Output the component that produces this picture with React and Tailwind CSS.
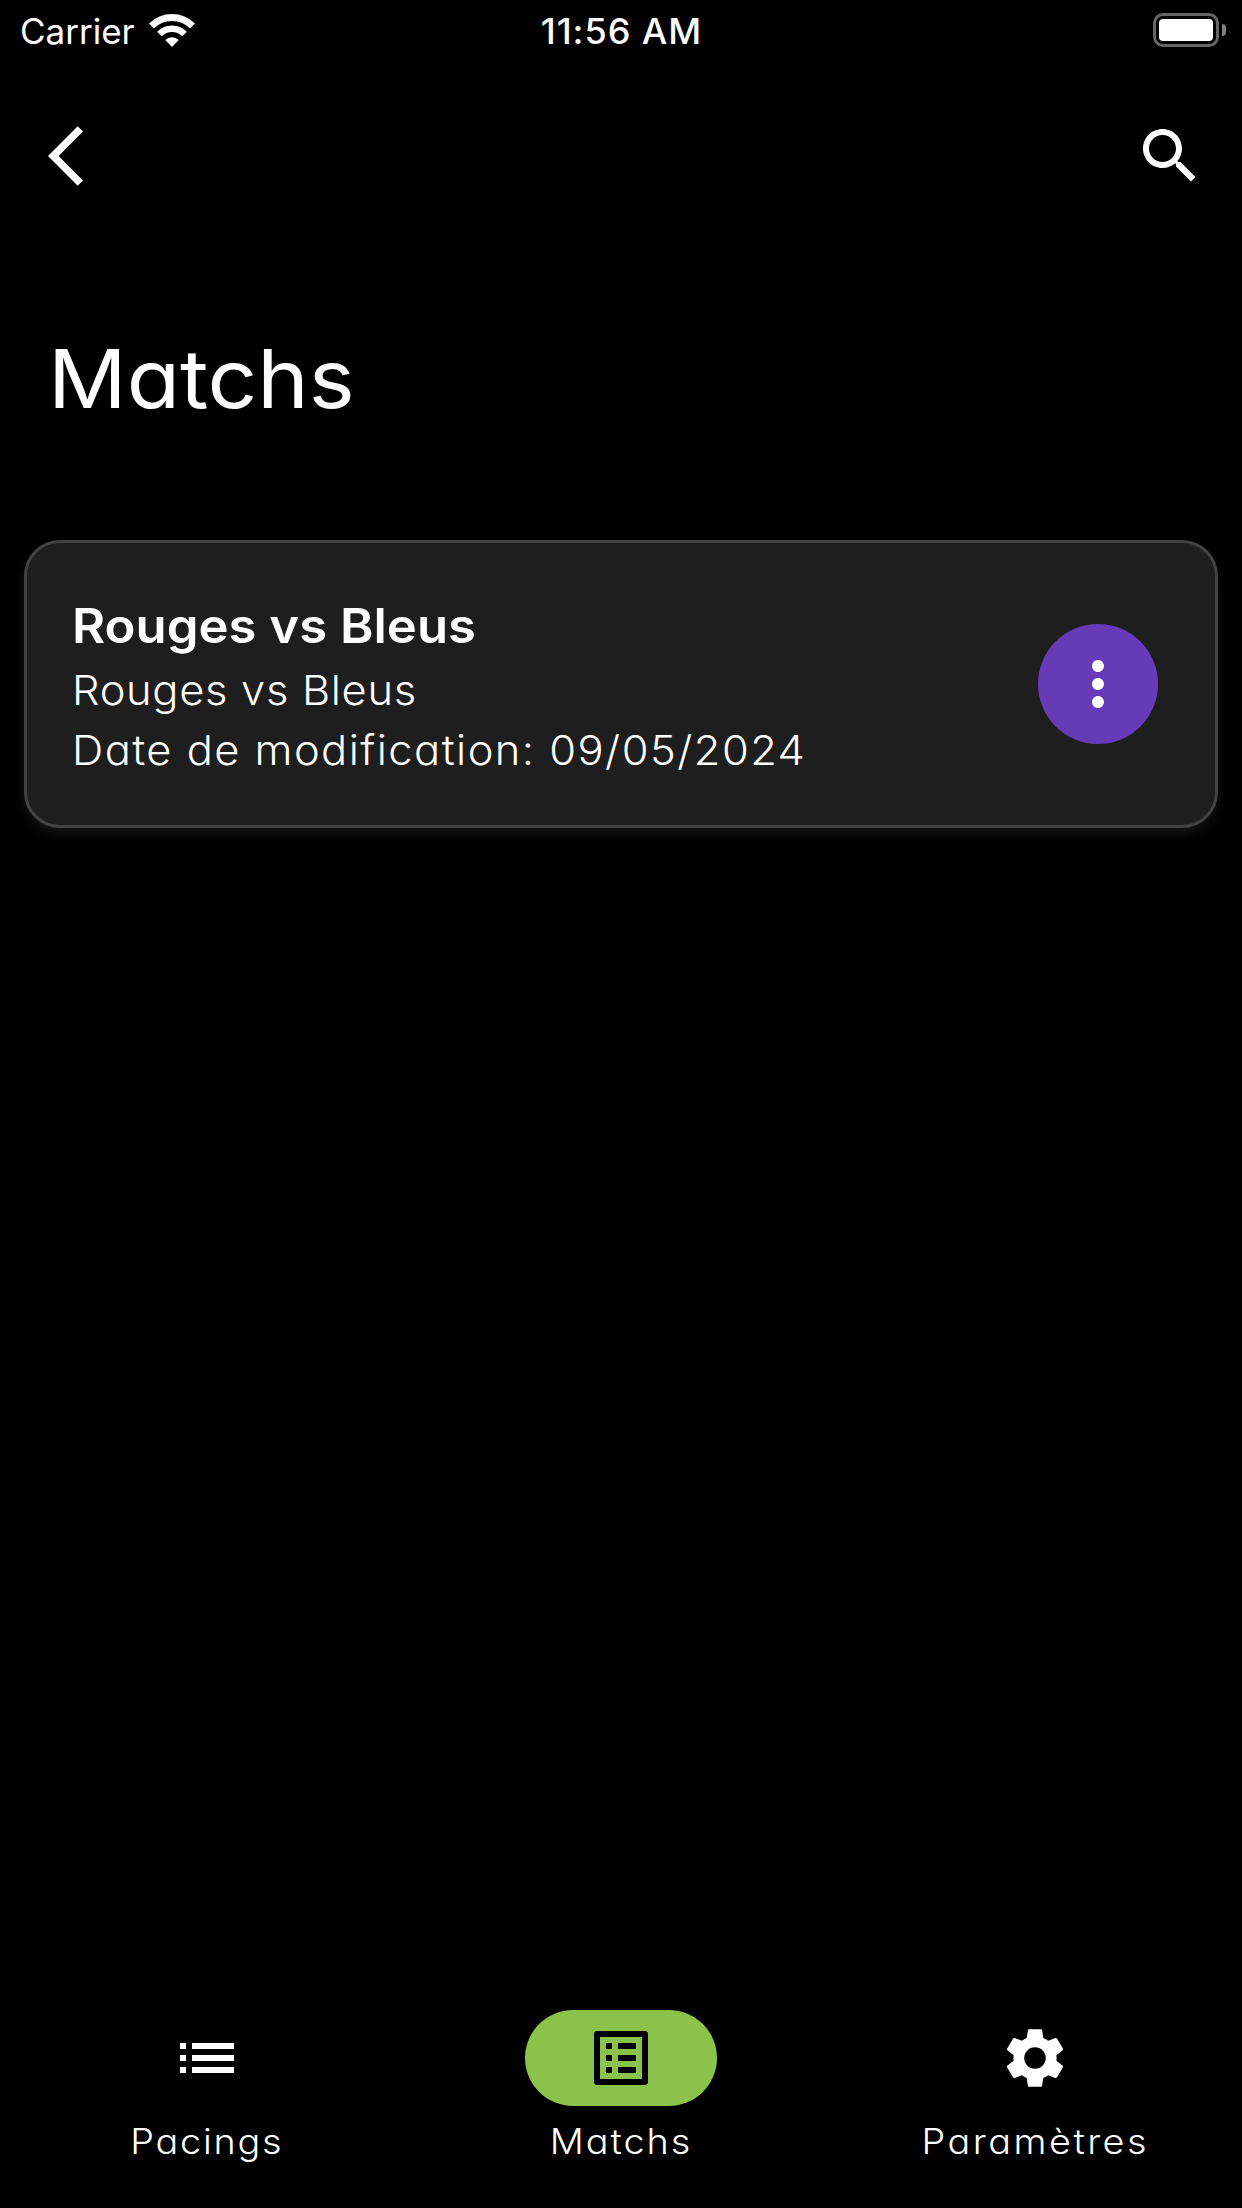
const Icon = ({ d }) => (
  <svg viewBox="0 0 24 24" fill="currentColor" className="size-18 shrink-0">
    <path d={d} />
  </svg>
);

const BACK = "M11.67 3.87 9.9 2.1 0 12l9.9 9.9 1.77-1.77L3.54 12z";
const SEARCH =
  "M15.5 14h-.79l-.28-.27C15.41 12.59 16 11.11 16 9.5 16 5.91 13.09 3 9.5 3S3 5.91 3 9.5 5.91 16 9.5 16c1.61 0 3.09-.59 4.23-1.57l.27.28v.79l5 4.99L20.49 19l-4.99-5zm-6 0C7.01 14 5 11.99 5 9.5S7.01 5 9.5 5 14 7.01 14 9.5 11.99 14 9.5 14z";
const MORE =
  "M12 8c1.1 0 2-.9 2-2s-.9-2-2-2-2 .9-2 2 .9 2 2 2zm0 2c-1.1 0-2 .9-2 2s.9 2 2 2 2-.9 2-2-.9-2-2-2zm0 6c-1.1 0-2 .9-2 2s.9 2 2 2 2-.9 2-2-.9-2-2-2z";
const LIST = "M3 13h2v-2H3v2zm0 4h2v-2H3v2zm0-8h2V7H3v2zm4 4h14v-2H7v2zm0 4h14v-2H7v2zM7 7v2h14V7H7z";
const LIST_ALT =
  "M19 5v14H5V5h14m1.1-2H3.9c-.5 0-.9.4-.9.9v16.2c0 .4.4.9.9.9h16.2c.4 0 .9-.5.9-.9V3.9c0-.5-.5-.9-.9-.9zM11 7h6v2h-6V7zm0 4h6v2h-6v-2zm0 4h6v2h-6zM7 7h2v2H7zm0 4h2v2H7zm0 4h2v2H7z";
const SETTINGS =
  "M19.14 12.94c.04-.3.06-.61.06-.94 0-.32-.02-.64-.07-.94l2.03-1.58c.18-.14.23-.41.12-.61l-1.92-3.32c-.12-.22-.37-.29-.59-.22l-2.39.96c-.5-.38-1.03-.7-1.62-.94l-.36-2.54c-.04-.24-.24-.41-.48-.41h-3.84c-.24 0-.43.17-.47.41l-.36 2.54c-.59.24-1.13.57-1.62.94l-2.39-.96c-.22-.08-.47 0-.59.22L2.74 8.87c-.12.21-.08.47.12.61l2.03 1.58c-.05.3-.09.63-.09.94s.02.64.07.94l-2.03 1.58c-.18.14-.23.41-.12.61l1.92 3.32c.12.22.37.29.59.22l2.39-.96c.5.38 1.03.7 1.62.94l.36 2.54c.05.24.24.41.48.41h3.84c.24 0 .44-.17.47-.41l.36-2.54c.59-.24 1.13-.56 1.62-.94l2.39.96c.22.08.47 0 .59-.22l1.92-3.32c.12-.22.07-.47-.12-.61l-2.01-1.58zM12 15.6c-1.98 0-3.6-1.62-3.6-3.6s1.62-3.6 3.6-3.6 3.6 1.62 3.6 3.6-1.62 3.6-3.6 3.6z";

function NavItem({ icon, label, active, labelClass }) {
  return (
    <div className="flex flex-1 flex-col items-center">
      <div className={`flex h-24 w-48 items-center justify-center rounded-[48px] ${active ? "bg-[#8bc34a] text-black" : ""}`}>
        <Icon d={icon} />
      </div>
      <span className={`mt-[11px] scale-x-[1.08] text-[35px] leading-[48px] font-light whitespace-nowrap ${labelClass}`}>
        {label}
      </span>
    </div>
  );
}

function StatusBar() {
  return (
    <header className="grid h-15 grid-cols-3 items-center [font-feature-settings:normal]">
      <div className="flex items-center gap-[14px] pl-5">
        <span className="pt-[3px] text-[35px] leading-[57px]">Carrier</span>
        <svg viewBox="0 0 46 33" className="h-[33px] w-[46px]" fill="none" stroke="#fff">
          <path d="M2.500 12A29 29 0 0 1 43.500 12" strokeWidth="7" />
          <path d="M10.450 19.950A17.750 17.750 0 0 1 35.550 19.950" strokeWidth="6.500" />
          <path d="M23 33 16.300 26.100A9.500 9.500 0 0 1 29.700 26.100Z" fill="#fff" stroke="none" />
        </svg>
      </div>
      <span className="scale-x-[1.03] pt-[3px] pl-px text-center text-[35px] leading-[57px] font-[550] tracking-[0.9px]">
        11:56 AM
      </span>
      <div className="flex items-center justify-end gap-[3px] pr-4">
        <div className="h-[34px] w-[66px] rounded-[10px] border-3 border-[#666] p-[3px]">
          <div className="h-full rounded-[4px] bg-white" />
        </div>
        <div className="h-3 w-1 rounded-r-full bg-[#808080]" />
      </div>
    </header>
  );
}

export default function App() {
  return (
    <div className="flex h-[2208px] w-[1242px] flex-col overflow-hidden bg-black font-['Inter',sans-serif] text-white [font-feature-settings:'cv11','calt'_0]">
      <StatusBar />

      <div className="flex h-48 items-center justify-between pr-9 pl-12">
        <Icon d={BACK} />
        <Icon d={SEARCH} />
      </div>

      <h1 className="mt-[77px] ml-12 origin-left scale-x-[1.075] self-start text-[81px] leading-[100px] font-normal">Matchs</h1>

      <main className="mt-[111px] flex-1 px-6">
        <article className="flex h-72 items-center justify-between rounded-[36px] border-3 border-[#424242] bg-[#1e1e1e] pr-[57px] pl-[45px] shadow-[0_6px_12px_rgba(255,255,255,0.08)]">
          <div className="flex flex-col items-start pt-[4px] whitespace-nowrap">
            <h2 className="origin-left scale-x-[1.06] text-[48px] leading-[68px] font-semibold">Rouges vs Bleus</h2>
            <p className="origin-left scale-x-[1.06] text-[41px] leading-[60px] font-light tracking-[0.63px]">Rouges vs Bleus</p>
            <p className="origin-left scale-x-[1.06] text-[41px] leading-[60px] font-light tracking-[1.36px]">
              Date de modification: 09/05/2024
            </p>
          </div>
          <button className="flex size-30 items-center justify-center rounded-full bg-[#673ab7]">
            <Icon d={MORE} />
          </button>
        </article>
      </main>

      <nav className="flex h-[198px]">
        <NavItem icon={LIST} label="Pacings" labelClass="tracking-[1.6px]" />
        <NavItem icon={LIST_ALT} label="Matchs" labelClass="tracking-[1.85px]" active />
        <NavItem icon={SETTINGS} label="Paramètres" labelClass="tracking-[2.3px]" />
      </nav>
    </div>
  );
}
